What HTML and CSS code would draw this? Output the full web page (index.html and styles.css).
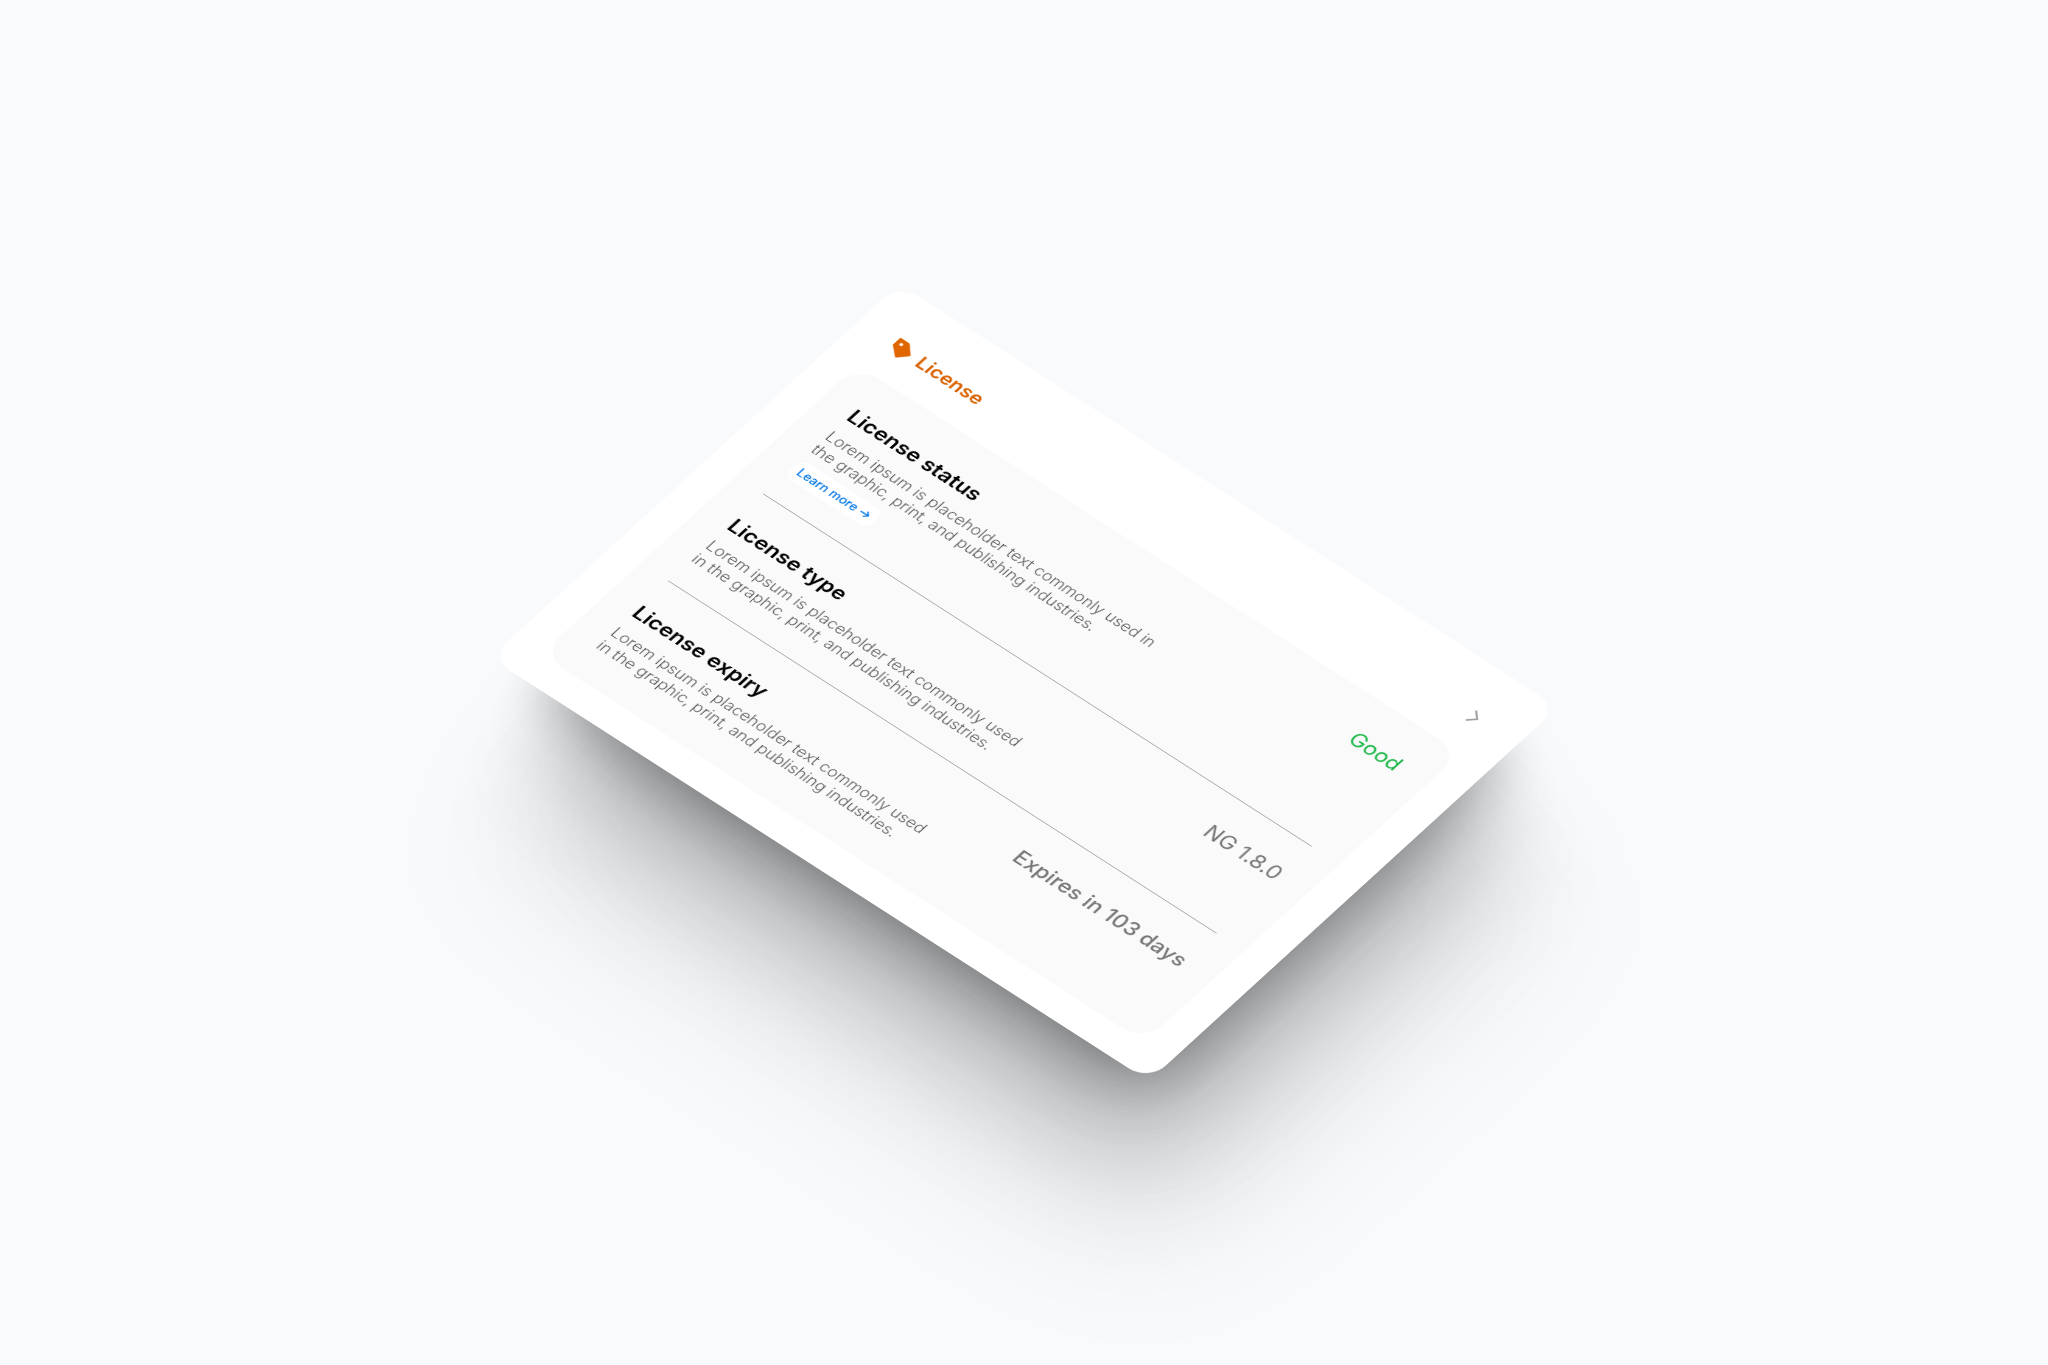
FILE: index.html
```html
<!DOCTYPE html>
<html lang="en">
<head>
<meta charset="utf-8">
<title>License</title>
<meta name="viewport" content="width=device-width, initial-scale=1">
<link rel="stylesheet" href="styles.css">
</head>
<body>
<main class="stage">
  <section class="card" aria-labelledby="card-title">
    <header class="card-header">
      <svg class="tag-icon" viewBox="0 0 24 24" aria-hidden="true">
        <path fill-rule="evenodd" d="M2.2 1H12.2a2 2 0 0 1 1.4.6L23.4 12a1.4 1.4 0 0 1 0 2L14.6 23.4a1.4 1.4 0 0 1-2 0L1.6 13.6A2 2 0 0 1 1 12.2V2.2A1.2 1.2 0 0 1 2.2 1ZM7.4 5.6a1.9 1.9 0 1 0 0 3.8 1.9 1.9 0 0 0 0-3.8Z"/>
      </svg>
      <h1 class="card-title" id="card-title">License</h1>
      <button class="open-button" type="button" aria-label="Open license">
        <svg class="chevron" viewBox="0 0 12 20" aria-hidden="true"><path d="M2 2l8 8-8 8"/></svg>
      </button>
    </header>
    <div class="panel">
      <article class="item">
        <div class="item-text item-text-wide">
          <h2 class="item-title">License status</h2>
          <p class="item-note">Lorem ipsum is placeholder text commonly used in the graphic, print, and publishing industries.</p>
          <a class="learn-more" href="#">Learn more
            <svg class="arrow" viewBox="0 0 12 12" aria-hidden="true"><path d="M1 6h10M7 2l4 4-4 4"/></svg>
          </a>
        </div>
        <p class="value value-good">Good</p>
      </article>
      <article class="item">
        <div class="item-text">
          <h2 class="item-title">License type</h2>
          <p class="item-note">Lorem ipsum is placeholder text commonly used in the graphic, print, and publishing industries.</p>
        </div>
        <p class="value">NG 1.8.0</p>
      </article>
      <article class="item">
        <div class="item-text">
          <h2 class="item-title">License expiry</h2>
          <p class="item-note">Lorem ipsum is placeholder text commonly used in the graphic, print, and publishing industries.</p>
        </div>
        <p class="value value-strong">Expires in 103 days</p>
      </article>
    </div>
  </section>
</main>
</body>
</html>
```
FILE: styles.css
```css
* {
  box-sizing: border-box;
}

body {
  margin: 0;
  background: #f8fafc;
  color: #000;
  font-family: Inter, "Liberation Sans", sans-serif;
}

h1, h2, p {
  margin: 0;
}

.stage {
  min-height: 100vh;
  display: flex;
  align-items: center;
  justify-content: center;
  overflow: hidden;
}

/* The card lies on a tilted plane; the shadows fall straight down the screen. */
.card {
  width: 100%;
  max-width: 860px;
  padding: 36px;
  border-radius: 26px;
  background: #fff;
  transform: rotateX(40deg) rotateZ(40deg);
  box-shadow:
    34px 40px 60px -40px rgba(0, 0, 0, 0.28),
    62px 74px 90px -44px rgba(0, 0, 0, 0.22),
    100px 120px 120px -32px rgba(0, 0, 0, 0.13),
    134px 160px 150px -10px rgba(0, 0, 0, 0.08),
    168px 200px 180px rgba(0, 0, 0, 0.06);
}

.card-header {
  display: flex;
  align-items: center;
  gap: 10px;
  height: 56px;
  margin-bottom: 16px;
  padding: 0 14px 0 9px;
}

.tag-icon {
  width: 24px;
  height: 24px;
  fill: #e06600;
}

.card-title {
  color: #d96200;
  font-size: 22px;
  line-height: 28px;
  font-weight: 600;
}

.open-button {
  display: flex;
  margin-left: auto;
  padding: 0;
  border: 0;
  background: none;
}

.chevron {
  width: 12px;
  height: 20px;
  fill: none;
  stroke: #999;
  stroke-width: 2;
}

.panel {
  padding: 4px 36px 8px;
  border-radius: 30px;
  background: #fafafa;
}

.item {
  display: flex;
  align-items: flex-start;
  justify-content: space-between;
  padding: 36px 0 29px;
}

.item + .item {
  border-top: 1px solid #aaa;
}

.item-text {
  max-width: 414px;
}

.item-text-wide {
  max-width: 440px;
}

.item-title {
  margin-bottom: 10px;
  font-size: 24px;
  line-height: 28px;
  font-weight: 600;
}

.item-note {
  color: #5c5c5c;
  font-size: 18px;
  line-height: 22px;
  font-weight: 300;
}

.learn-more {
  display: inline-flex;
  align-items: center;
  gap: 4px;
  height: 28px;
  margin: 8px 0 2px;
  padding: 0 8px;
  border-radius: 10px;
  background: #fff;
  color: #0077e6;
  font-size: 14px;
  line-height: 20px;
  font-weight: 500;
  text-decoration: none;
}

.arrow {
  width: 12px;
  height: 12px;
  fill: none;
  stroke: currentColor;
  stroke-width: 1.5;
}

.value {
  color: #777;
  font-size: 24px;
  line-height: 28px;
}

.value-good {
  color: #1fb84a;
}

.value-strong {
  font-weight: 500;
}
```
